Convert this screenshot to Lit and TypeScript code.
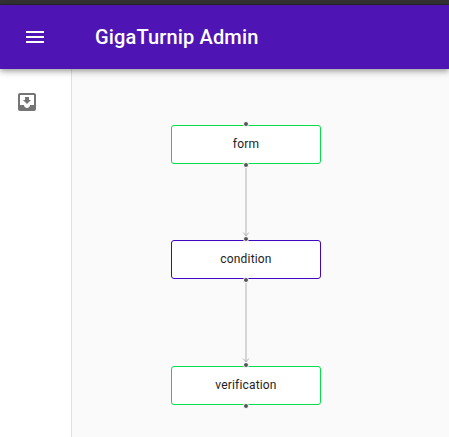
import { LitElement, html, css, svg } from "lit";
import { customElement, property } from "lit/decorators.js";
import { styleMap } from "lit/directives/style-map.js";

interface Stage {
  label: string;
  x: number;
  y: number;
  color: string;
}

const NODE_WIDTH = 150;
const NODE_HEIGHT = 39;

const stages: Stage[] = [
  { label: "form", x: 99, y: 56, color: "#05df4a" },
  { label: "condition", x: 99, y: 171, color: "#3d05c4" },
  { label: "verification", x: 99, y: 297, color: "#05df4a" },
];

@customElement("flow-node")
export class FlowNode extends LitElement {
  @property() label = "";

  static styles = css`
    :host {
      position: relative;
      box-sizing: border-box;
      display: flex;
      align-items: center;
      justify-content: center;
      border: 1px solid var(--node-color);
      border-radius: 3px;
      background: #fff;
      color: #222;
      font: 12px/18px Roboto, sans-serif;
      letter-spacing: 0.17px;
    }
    .label {
      position: relative;
      top: -0.5px;
    }
    .handle {
      position: absolute;
      box-sizing: border-box;
      left: calc(50% - 3px);
      width: 6px;
      height: 6px;
      border: 1px solid #fff;
      border-radius: 50%;
      background: #555;
    }
    .target {
      top: -5px;
    }
    .source {
      bottom: -5px;
    }
  `;

  render() {
    return html`
      <span class="handle target"></span>
      <span class="label">${this.label}</span>
      <span class="handle source"></span>
    `;
  }
}

@customElement("app-root")
export class AppRoot extends LitElement {
  static styles = css`
    :host {
      display: flex;
      flex-direction: column;
      height: 100vh;
      overflow: hidden;
      font-family: Roboto, sans-serif;
      background: #fafafa;
    }
    .strip {
      flex: none;
      box-sizing: border-box;
      height: 5px;
      background: #323232;
      border-bottom: 1px solid #29272c;
    }
    .bar {
      flex: none;
      position: relative;
      z-index: 1;
      box-sizing: border-box;
      height: 64px;
      padding-left: 23px;
      display: flex;
      align-items: center;
      gap: 48px;
      color: #fff;
      background: #4e15b4;
      box-shadow: 0 2px 4px -1px rgba(0, 0, 0, 0.2),
        0 4px 5px 0 rgba(0, 0, 0, 0.14), 0 1px 10px 0 rgba(0, 0, 0, 0.12);
    }
    .title {
      margin: 0;
      font-size: 20px;
      line-height: 32px;
      font-weight: 500;
      letter-spacing: 0.15px;
      white-space: nowrap;
    }
    .icon {
      flex: none;
      display: block;
      width: 24px;
      height: 24px;
      fill: currentColor;
    }
    .body {
      flex: 1;
      min-height: 0;
      display: flex;
    }
    .drawer {
      flex: none;
      box-sizing: border-box;
      width: 72px;
      padding: 21px 0 0 15px;
      background: #fff;
      border-right: 1px solid #e0e0e0;
      color: #757575;
    }
    .canvas {
      flex: 1;
      position: relative;
      overflow: hidden;
    }
    .edges {
      position: absolute;
      inset: 0;
      width: 100%;
      height: 100%;
    }
    .edge {
      fill: none;
      stroke: #b1b1b7;
      stroke-width: 1;
    }
    .head {
      fill: none;
      stroke: #b1b1b7;
      stroke-width: 1;
      stroke-linecap: round;
      stroke-linejoin: round;
    }
    .node {
      position: absolute;
    }
  `;

  private renderEdge(from: Stage, to: Stage) {
    const x = from.x + NODE_WIDTH / 2;
    const start = from.y + NODE_HEIGHT + 4;
    const end = to.y - 4;
    return svg`
      <path class="edge" d="M${x},${start} V${end}" />
      <polyline class="head" points="${x - 2.5},${end - 3.1} ${x},${end} ${x + 2.5},${end - 3.1}" />
    `;
  }

  render() {
    return html`
      <div class="strip"></div>
      <header class="bar">
        <svg class="icon" viewBox="0 0 24 24">
          <path d="M3 18h18v-2H3v2zm0-5h18v-2H3v2zm0-7v2h18V6H3z" />
        </svg>
        <h1 class="title">GigaTurnip Admin</h1>
      </header>
      <div class="body">
        <nav class="drawer">
          <svg class="icon" viewBox="0 0 24 24">
            <path
              d="M19 3H4.99c-1.11 0-1.98.9-1.98 2L3 19c0 1.1.88 2 1.99 2H19c1.1 0 2-.9 2-2V5c0-1.1-.9-2-2-2zm0 12h-4c0 1.66-1.35 3-3 3s-3-1.34-3-3H4.99V5H19v10zm-3-5h-2V7h-4v3H8l4 4 4-4z"
            />
          </svg>
        </nav>
        <main class="canvas">
          <svg class="edges">
            ${stages.slice(1).map((s, i) => this.renderEdge(stages[i], s))}
          </svg>
          ${stages.map(
            (s) => html`<flow-node
              class="node"
              .label=${s.label}
              style=${styleMap({
                left: `${s.x}px`,
                top: `${s.y}px`,
                width: `${NODE_WIDTH}px`,
                height: `${NODE_HEIGHT}px`,
                "--node-color": s.color,
              })}
            ></flow-node>`
          )}
        </main>
      </div>
    `;
  }
}
